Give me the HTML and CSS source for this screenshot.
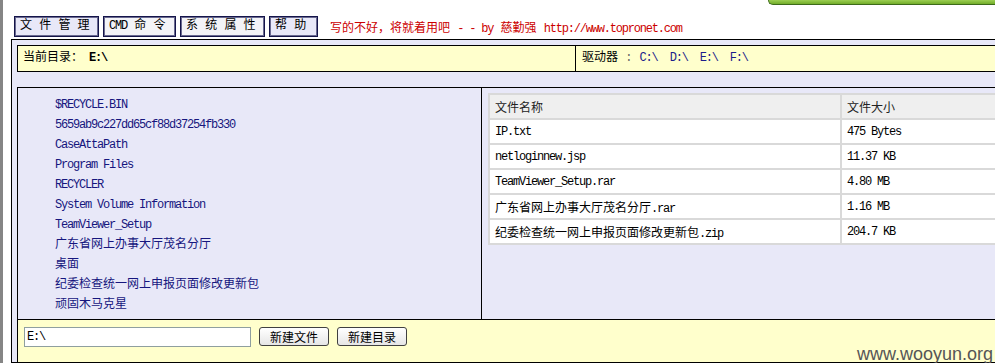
FILE: index.html
```html
<!DOCTYPE html>
<html lang="zh-CN">
<head>
  <meta charset="UTF-8" />
  <title>文件管理</title>
  <link rel="stylesheet" href="styles.css">
</head>
<body>

  <div class="topbar"></div>

  <div class="page">
    <nav class="tabs">
      <span class="tab tab-wide tab-active">文 件 管 理</span>
      <span class="tab tab-cmd"><span class="en">CMD</span> 命 令</span>
      <span class="tab tab-wide">系 统 属 性</span>
      <span class="tab tab-help tab-active">帮 助</span>
      <span class="notice">写的不好，将就着用吧 <span class="en">- - by</span> 慈勤强 <span class="en">http://www.topronet.com</span></span>
    </nav>

    <div class="panel">
      <div class="pathbar">
        <div class="path">当前目录：<b class="en">&nbsp;E:\</b></div>
        <div class="drives">驱动器 <span class="sep">:</span> <span class="en"><a>C:\</a>&nbsp;&nbsp;<a>D:\</a>&nbsp;&nbsp;<a>E:\</a>&nbsp;&nbsp;<a>F:\</a></span></div>
      </div>

      <div class="browser">
        <ul class="dirs">
          <li class="en">$RECYCLE.BIN</li>
          <li class="en">5659ab9c227dd65cf88d37254fb330</li>
          <li class="en">CaseAttaPath</li>
          <li class="en">Program Files</li>
          <li class="en">RECYCLER</li>
          <li class="en">System Volume Information</li>
          <li class="en">TeamViewer_Setup</li>
          <li>广东省网上办事大厅茂名分厅</li>
          <li>桌面</li>
          <li>纪委检查统一网上申报页面修改更新包</li>
          <li>顽固木马克星</li>
        </ul>

        <div class="files">
          <table>
            <tr><th>文件名称</th><th>文件大小</th></tr>
            <tr><td class="en">IP.txt</td><td class="en">475 Bytes</td></tr>
            <tr><td class="en">netloginnew.jsp</td><td class="en">11.37 KB</td></tr>
            <tr><td class="en">TeamViewer_Setup.rar</td><td class="en">4.80 MB</td></tr>
            <tr><td>广东省网上办事大厅茂名分厅<span class="en">.rar</span></td><td class="en">1.16 MB</td></tr>
            <tr><td>纪委检查统一网上申报页面修改更新包<span class="en">.zip</span></td><td class="en">204.7 KB</td></tr>
          </table>
        </div>

        <div class="actions">
          <input type="text" class="en" value="E:\">
          <button type="button">新建文件</button>
          <button type="button">新建目录</button>
        </div>
      </div>
    </div>
  </div>

  <div class="watermark">www.wooyun.org</div>

</body>
</html>
```

FILE: styles.css
```css
html, body {
  overflow: hidden;
}

body {
  margin: 0;
  padding: 16px 0 0 8px;
  height: 100vh;
  box-sizing: border-box;
  border-left: 3px solid #858585;
  background-color: #fff;
  font-family: 'Liberation Mono', 'Noto Sans CJK SC', monospace;
  font-size: 12px;
  color: #000;
}

.en {
  letter-spacing: -1.2px;
}

.topbar {
  position: absolute;
  top: 0;
  right: 0;
  width: 226px;
  height: 4px;
  background: linear-gradient(#9ccf52, #72ad2a);
  border-left: 1px solid #3d6b1a;
  border-bottom: 1px solid #3d6b1a;
  border-bottom-left-radius: 5px;
}

.page {
  width: 1010px;
}

.tabs {
  display: flex;
  align-items: center;
  gap: 4px;
  margin-left: 3px;
  margin-bottom: 2px;
}

.tab {
  box-sizing: border-box;
  height: 21px;
  line-height: 17px;
  padding-left: 5px;
  border: 1px solid #14144a;
  box-shadow: inset 0 0 0 1px #6a6a90;
  background-color: #f3f3f7;
  white-space: nowrap;
  padding-top: 1px;
}

.tab-active {
  background-color: #e8e8f8;
}

.tab-wide {
  width: 85px;
}

.tab-cmd {
  width: 73px;
}

.tab-help {
  width: 49px;
}

.notice {
  margin-left: 8px;
  color: #cc0000;
  white-space: nowrap;
}

.panel {
  border: 1px solid #000;
  background-color: #e8e8f8;
  padding: 5px 0 0 5px;
}

.pathbar {
  display: grid;
  grid-template-columns: 557px 1fr;
  height: 27px;
  box-sizing: border-box;
  border: 1px solid #000;
  background-color: #ffffcc;
  line-height: 25px;
}

.path {
  padding-left: 5px;
}

.drives {
  padding-left: 6px;
  border-left: 1px solid #000;
}

.drives .sep {
  color: #666;
}

.drives a {
  color: #1c1c8a;
}

.browser {
  display: grid;
  grid-template-columns: 464px 1fr;
  margin-top: 15px;
  border: 1px solid #000;
  border-bottom: none;
}

.dirs {
  list-style: none;
  margin: 0;
  padding: 7px 0 4px 37px;
  border-right: 1px solid #000;
  color: #16167e;
}

.dirs li {
  line-height: 20px;
  white-space: nowrap;
}

.files {
  padding: 5px 0 0 6px;
}

.files table {
  width: 100%;
  border-spacing: 2px;
  background-color: #d9d9d9;
}

.files th,
.files td {
  height: 23px;
  padding: 0 5px;
  text-align: left;
  font-weight: normal;
  white-space: nowrap;
  background-color: #fff;
}

.files th {
  background-color: #efefef;
  color: #222;
}

.files th:first-child {
  width: 340px;
}

.actions {
  grid-column: 1 / -1;
  display: flex;
  align-items: flex-start;
  gap: 8px;
  height: 43px;
  box-sizing: border-box;
  padding: 7px 0 0 6px;
  border-top: 1px solid #000;
  background-color: #ffffcc;
}

.actions input {
  box-sizing: border-box;
  width: 227px;
  height: 20px;
  margin: 0;
  padding: 0 2px;
  border: 1px solid #8f9f9f;
  font-family: inherit;
  font-size: 12px;
}

.actions button {
  box-sizing: border-box;
  width: 70px;
  height: 19px;
  margin: 0;
  padding: 0;
  border: 1px solid #404040;
  border-radius: 3px;
  background: linear-gradient(#ffffff, #e6e6e6);
  font-family: 'Noto Sans CJK SC', sans-serif;
  font-size: 12px;
  line-height: 17px;
  color: #000;
}

.watermark {
  position: absolute;
  right: 2px;
  bottom: 0;
  font-family: 'Liberation Sans', sans-serif;
  font-size: 18px;
  line-height: 18px;
  color: #555;
}
```
